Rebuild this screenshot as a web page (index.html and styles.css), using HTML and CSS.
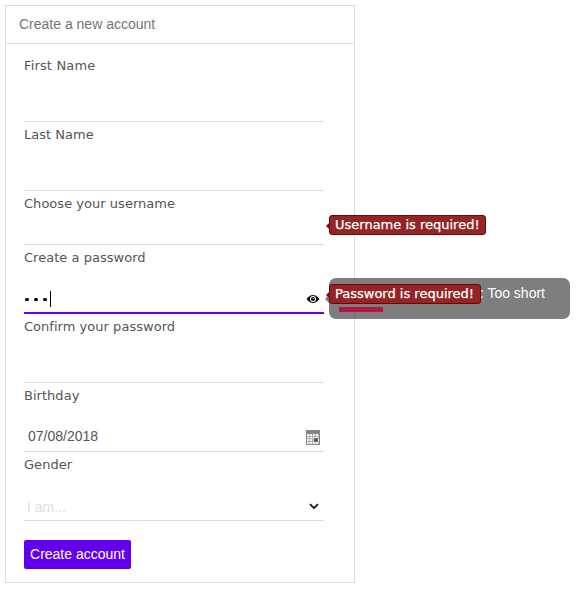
FILE: index.html
```html
<!DOCTYPE html>
<html lang="en">
<head>
<meta charset="utf-8">
<title>Create a new account</title>
<link rel="stylesheet" href="styles.css">
</head>
<body>
<form class="card">
  <header class="card-header">Create a new account</header>
  <div class="card-body">
    <div class="field"><div class="label wide">First Name</div><div class="control"></div></div>
    <div class="field"><div class="label">Last Name</div><div class="control"></div></div>
    <div class="field field-short"><div class="label">Choose your username</div><div class="control"></div>
      <div class="error error-user">Username is required!</div>
    </div>
    <div class="field field-focus"><div class="label">Create a password</div>
      <div class="control">
        <span class="dots"><i></i><i></i><i></i></span><span class="caret"></span>
        <svg class="eye" width="14" height="10" viewBox="0 0 14 10"><path d="M.6 5Q3.300 .9 7 .9T13.400 5Q10.700 9.100 7 9.100T.6 5Z" fill="#111"/><circle cx="7" cy="5" r="3" fill="#fff"/><circle cx="7" cy="5" r="2" fill="#111"/><circle cx="7.200" cy="4.500" r=".6" fill="#ddd"/></svg>
      </div>
      <div class="strength"><span class="strength-text">: Too short</span><span class="strength-bar"></span></div>
      <div class="error error-pass">Password is required!</div>
    </div>
    <div class="field"><div class="label">Confirm your password</div><div class="control"></div></div>
    <div class="field"><div class="label">Birthday</div>
      <div class="control control-date"><span>07/08/2018</span>
        <svg class="calendar" width="14" height="15" viewBox="0 0 14 15" shape-rendering="crispEdges"><path fill="#858585" d="M0 0h14v15H0z"/><path fill="#b5b5b5" d="M1 4h12v10H1z"/><path fill="#f4f4f4" d="M1 4h2v2H1zM4 4h2v2H4zM7 4h2v2H7zM10 4h2v2h-2zM1 7h2v1H1zM4 7h2v1H4zM7 7h2v1H7zM10 7h2v1h-2zM1 9h2v2H1zM4 9h2v2H4zM12 9h1v2h-1zM1 12h2v2H1zM4 12h2v2H4zM7 12h2v2H7zM10 12h2v2h-2z"/><path fill="#777" d="M8 8h4v4H8z"/><path fill="#444" d="M9 9h2v2H9z"/></svg>
      </div>
    </div>
    <div class="field"><div class="label">Gender</div>
      <div class="control control-select"><span>I am...</span>
        <svg class="chevron" width="10" height="7" viewBox="0 0 10 7"><path d="M1 1.200 5 5.100 9 1.200" fill="none" stroke="#111" stroke-width="1.800"/></svg>
      </div>
    </div>
    <button class="submit" type="button">Create account</button>
  </div>
</form>
</body>
</html>
```
FILE: styles.css
```css
* { box-sizing: border-box; }
body { margin: 5px; background: #fff; font-family: "Liberation Sans", Arial, sans-serif; }
.card { width: 350px; height: 578px; border: 1px solid #ddd; }
.card-header { height: 38px; padding-left: 13px; border-bottom: 1px solid #ddd; font-size: 14px; line-height: 36px; color: #757575; }
.card-body { padding: 9px 30px 13px 18px; }
.field { position: relative; display: flex; flex-direction: column; height: 69px; border-bottom: 1px solid #ddd; }
.field-short { height: 54px; }
.field-focus { border-bottom: 2px solid #6200ee; }
.label { height: 20px; padding-top: 5px; font: 13px/16px "DejaVu Sans", Verdana, sans-serif; letter-spacing: 0.03px; color: #555; }
.wide { letter-spacing: 0.15px; }
.control { flex: 1; display: flex; align-items: center; }
.dots { display: flex; gap: 5.5px; padding: 22px 0 0 1px; }
.dots i { width: 3.5px; height: 3.5px; border-radius: 50%; background: #000; }
.caret { width: 1px; height: 16px; margin: 20px 0 0 3.5px; background: #000; }
.eye { margin: 20px 4px 0 auto; }
.control-date { padding: 18px 4px 0; justify-content: space-between; font-size: 14px; color: #555; }
.calendar { margin-top: 2px; }
.control-select { padding: 20px 5px 0 3px; justify-content: space-between; font-size: 14px; color: #dedee0; }
.control-select span { padding-top: 2px; }
.submit { display: block; width: 107px; height: 29px; margin-top: 19px; padding: 0 0 1px; border: 0; border-radius: 2px; background: #6200ee; color: #fff; font: 14px/28px "Liberation Sans", Arial, sans-serif; }
.error { position: absolute; left: 305px; height: 20px; padding: 0 5px; border: 1px solid #700; border-radius: 3px; background: #922626; color: #fff; font: 13px/18px "DejaVu Sans", Verdana, sans-serif; -webkit-text-stroke: 0.25px #fff; white-space: nowrap; }
.error::before { content: ""; position: absolute; left: -4px; top: 6px; border: solid transparent; border-width: 4px 4px 4px 0; border-right-color: #7c1010; }
.error-user { top: 24px; width: 157px; }
.error-pass { top: 39px; width: 152px; }
.strength { position: absolute; left: 305px; top: 33px; width: 241px; height: 41px; border-radius: 7px; background: rgba(97, 97, 97, 0.82); color: #fff; font-size: 14px; }
.strength::before { content: ""; position: absolute; left: -4px; top: 17px; border: solid transparent; border-width: 4px 4px 4px 0; border-right-color: #7e7e7e; }
.strength-text { position: absolute; right: 25px; top: 7px; }
.strength-bar { position: absolute; left: 10px; top: 29px; width: 44px; height: 5px; background: #b2184c; }
```
